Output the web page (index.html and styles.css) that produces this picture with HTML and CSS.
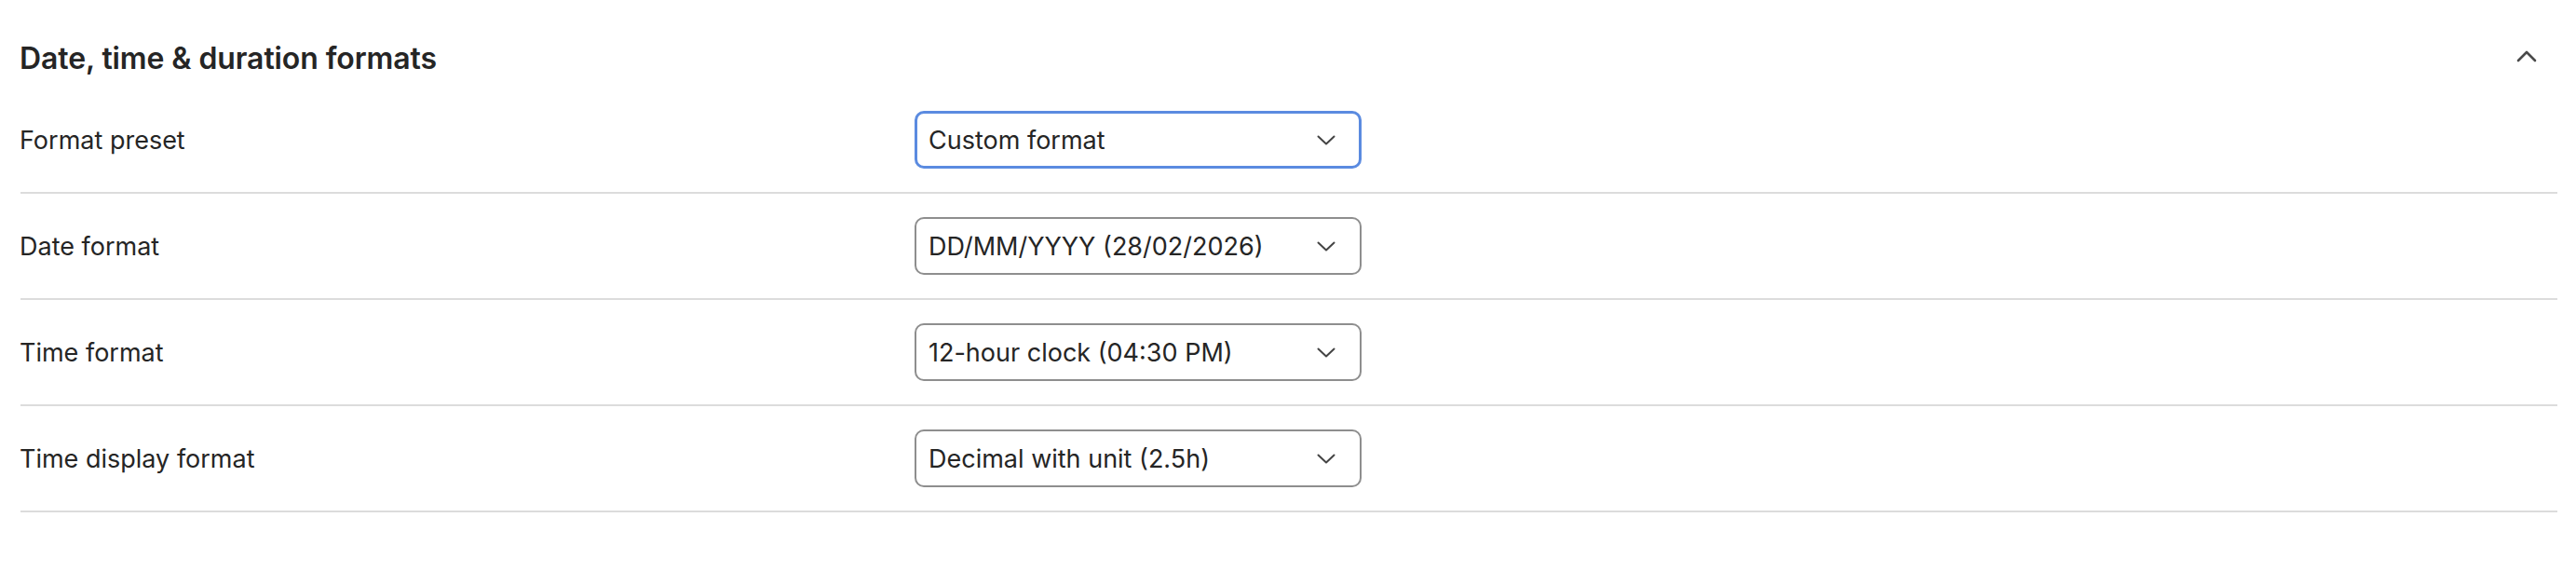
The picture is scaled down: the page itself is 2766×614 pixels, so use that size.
FILE: index.html
```html
<!DOCTYPE html>
<html lang="en">
<head>
    <meta charset="UTF-8">
    <meta name="viewport" content="width=device-width, initial-scale=1.0">
    <title>Settings - Formats</title>
    <link rel="stylesheet" href="styles.css">
</head>
<body>
    <section class="panel">
        <div class="panel-head">
            <h2>Date, time &amp; duration formats</h2>
            <button class="collapse" aria-label="Collapse section">
                <svg width="22" height="14" viewBox="0 0 22 14"><path d="M2 12 L11 3 L20 12" fill="none" stroke="#4a4a4a" stroke-width="2.6" stroke-linecap="round" stroke-linejoin="round"/></svg>
            </button>
        </div>

        <div class="row">
            <label>Format preset</label>
            <div class="picker focused">
                <span>Custom format</span>
                <svg class="chev" width="20" height="11" viewBox="0 0 20 11"><path d="M1.5 1.5 L10 9.5 L18.5 1.5" fill="none" stroke="#444" stroke-width="2" stroke-linecap="round" stroke-linejoin="round"/></svg>
            </div>
        </div>
        <div class="row">
            <label>Date format</label>
            <div class="picker">
                <span>DD/MM/YYYY (28/02/2026)</span>
                <svg class="chev" width="20" height="11" viewBox="0 0 20 11"><path d="M1.5 1.5 L10 9.5 L18.5 1.5" fill="none" stroke="#444" stroke-width="2" stroke-linecap="round" stroke-linejoin="round"/></svg>
            </div>
        </div>
        <div class="row">
            <label>Time format</label>
            <div class="picker">
                <span>12-hour clock (04:30 PM)</span>
                <svg class="chev" width="20" height="11" viewBox="0 0 20 11"><path d="M1.5 1.5 L10 9.5 L18.5 1.5" fill="none" stroke="#444" stroke-width="2" stroke-linecap="round" stroke-linejoin="round"/></svg>
            </div>
        </div>
        <div class="row">
            <label>Time display format</label>
            <div class="picker">
                <span>Decimal with unit (2.5h)</span>
                <svg class="chev" width="20" height="11" viewBox="0 0 20 11"><path d="M1.5 1.5 L10 9.5 L18.5 1.5" fill="none" stroke="#444" stroke-width="2" stroke-linecap="round" stroke-linejoin="round"/></svg>
            </div>
        </div>
    </section>
</body>
</html>
```

FILE: styles.css
```css
body {
    margin: 0;
    background: #fff;
    color: #252525;
    font-family: Inter, "Noto Sans", sans-serif;
}

.panel {
    padding: 0 20px 0 22px;
}

.panel-head {
    height: 94px;
    box-sizing: border-box;
    padding-top: 26px;
    display: flex;
    align-items: center;
    justify-content: space-between;
}

.panel-head h2 {
    margin: 4px 0 0 -1px;
    font-size: 32px;
    font-weight: 600;
    letter-spacing: -0.1px;
}

.collapse {
    background: none;
    border: none;
    padding: 0;
    margin: 0 22px 0 0;
    display: flex;
    cursor: pointer;
}

.row {
    display: grid;
    grid-template-columns: 960px 480px;
    align-items: center;
    padding: 25px 0;
    border-bottom: 2px solid #dcdcdc;
}

.row label {
    font-size: 27px;
    margin-left: -1px;
}

.picker {
    height: 62px;
    box-sizing: border-box;
    border: 2px solid #8e8e8e;
    border-radius: 10px;
    padding: 0 26px 0 13px;
    display: flex;
    align-items: center;
    justify-content: space-between;
    font-size: 27px;
}

/* focused select gets the blue ring */
.picker.focused {
    border: 3px solid #5b8be0;
    padding: 0 25px 0 12px;
}

.chev {
    display: block;
}
```
